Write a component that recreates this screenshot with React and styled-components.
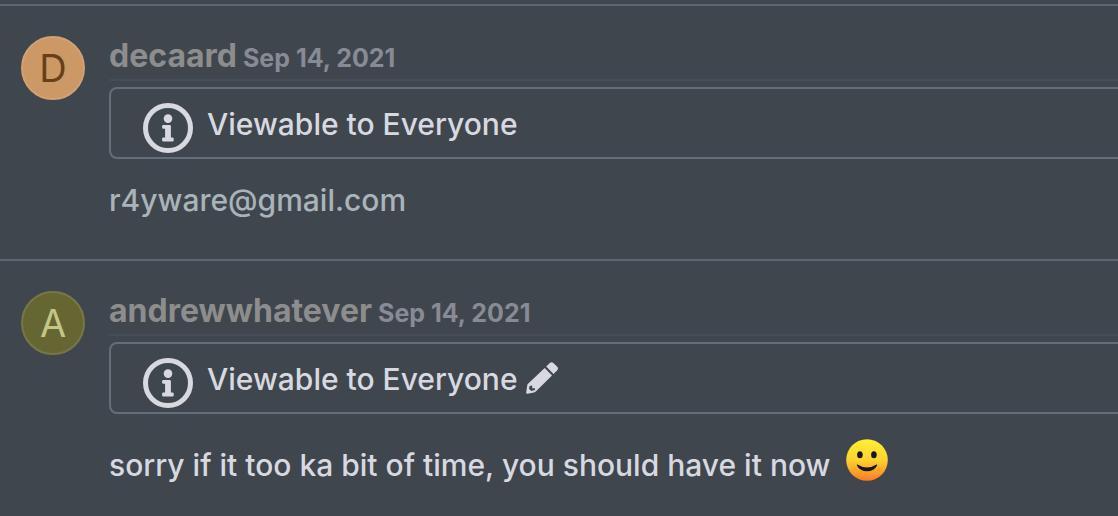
import styled, { createGlobalStyle } from 'styled-components';

const GlobalStyle = createGlobalStyle`
  body {
    margin: 0;
    background-color: #40464e;
    color: #d8d9e0;
    font-family: Inter, "Liberation Sans", sans-serif;
    font-size: 30px;
    font-weight: 500;
    line-height: 40px;
  }
`;

const Thread = styled.main`
  padding-top: 4px;
  overflow: hidden;
`;

// One comment, avatar on the left and content on the right
const Entry = styled.article`
  display: flex;
  gap: 24px;
  padding: 30px 0 39px 21px;
  border-top: 2px solid #5c6672;
`;

const Avatar = styled.div`
  display: flex;
  flex-shrink: 0;
  align-items: center;
  justify-content: center;
  box-sizing: border-box;
  width: 64px;
  height: 64px;
  border: 2px solid ${(props) => props.$ring};
  border-radius: 50%;
  background-color: ${(props) => props.$fill};
  color: ${(props) => props.$ink};
  font-size: 38px;
  font-weight: 400;
`;

const Content = styled.div`
  flex: 1;
  min-width: 0;
`;

const EntryHeader = styled.header`
  display: flex;
  align-items: baseline;
  gap: 6px;
  height: 43px;
  border-bottom: 2px solid #474d58;
`;

const Author = styled.a`
  color: #8d8d8d;
  font-size: 32px;
  font-weight: 700;
  text-decoration: none;
`;

const Posted = styled.time`
  color: #888b95;
  font-size: 25px;
  font-weight: 700;
`;

// Open on the right, it runs past the window edge
const Visibility = styled.div`
  display: flex;
  align-items: center;
  box-sizing: border-box;
  height: 72px;
  margin: 6px -8px 0 0;
  padding: 2px 0 0 32px;
  border: 2px solid #646d7a;
  border-radius: 8px;
`;

const InfoIcon = styled.svg`
  width: 50px;
  height: 50px;
  margin: 8px 14px 0 0;
`;

const EditButton = styled.button`
  display: flex;
  margin: 0 0 2px 8px;
  padding: 0;
  border: 0;
  background: none;
  color: inherit;
  cursor: pointer;
`;

const Message = styled.p`
  margin: 21px 0 0;
  color: ${(props) => (props.$muted ? '#a9b4ba' : 'inherit')};
`;

const Emoji = styled.svg`
  width: 42px;
  height: 42px;
  margin: 4px 0 5px 8px;
  vertical-align: -10px;
`;

function Info() {
  return (
    <InfoIcon viewBox="0 0 50 50" aria-hidden="true">
      <circle cx="25" cy="25" r="22.5" fill="none" stroke="currentColor" strokeWidth="5" />
      <circle cx="25" cy="15.6" r="4.3" fill="currentColor" />
      <path
        d="M20.3 22h6.4q1.2 0 1.2 1.2v11.4h1.6q1.2 0 1.2 1.2v1.4q0 1.2-1.2 1.2h-9.2q-1.2 0-1.2-1.2v-1.4q0-1.2 1.2-1.2h1.8v-8.8h-1.8q-1.2 0-1.2-1.2v-1.4q0-1.2 1.2-1.2z"
        fill="currentColor"
      />
    </InfoIcon>
  );
}

function Pencil() {
  return (
    <svg width="32" height="32" viewBox="0 0 32 32" fill="currentColor" aria-hidden="true">
      <path d="M20.2 4.6l3.4-3.4q2-2 4 0l3.4 3.4q2 2 0 4l-3.5 3.4z" />
      <path
        fillRule="evenodd"
        d="M18.7 6.1l7.3 7.3-16.2 16.2q-.7.7-1.8.9l-6.4 1.3q-1.6.2-1.4-1.4l1-7q.1-.9.8-1.6zM3.6 23.9l-.6 2.9 2.2 2.2 3.8-.9v-1.9h-2.8v-2.8z"
      />
    </svg>
  );
}

function Smile() {
  return (
    <Emoji viewBox="0 0 42 42" role="img" aria-label="Slightly smiling face">
      <defs>
        <linearGradient id="smile-face" x1="0" y1="0" x2="0" y2="1">
          <stop offset="0" stopColor="#fff033" />
          <stop offset="0.5" stopColor="#ffd22f" />
          <stop offset="1" stopColor="#fb7a23" />
        </linearGradient>
      </defs>
      <circle cx="21" cy="21" r="20.8" fill="url(#smile-face)" />
      <ellipse cx="13.9" cy="15.8" rx="2.8" ry="3.5" fill="#17172a" />
      <ellipse cx="27.9" cy="15.8" rx="2.8" ry="3.5" fill="#17172a" />
      <path
        d="M11.4 25.6q9.6 6 19.2 0 .9-.1.5.9-3 5.8-10.1 5.8t-10.1-5.8q-.4-1 .5-.9z"
        fill="#17172a"
      />
    </Emoji>
  );
}

const comments = [
  {
    author: 'decaard',
    colors: { $fill: '#cc9966', $ring: '#d1a173', $ink: '#664019' },
    text: 'r4yware@gmail.com',
    muted: true,
  },
  {
    author: 'andrewwhatever',
    colors: { $fill: '#666633', $ring: '#777747', $ink: '#c5c587' },
    text: 'sorry if it too ka bit of time, you should have it now',
    editable: true,
    smile: true,
  },
];

export default function App() {
  return (
    <>
      <GlobalStyle />
      <Thread>
        {comments.map((comment) => (
          <Entry key={comment.author}>
            <Avatar {...comment.colors}>{comment.author[0].toUpperCase()}</Avatar>
            <Content>
              <EntryHeader>
                <Author href={`#${comment.author}`}>{comment.author}</Author>
                <Posted dateTime="2021-09-14">Sep 14, 2021</Posted>
              </EntryHeader>
              <Visibility>
                <Info />
                <span>Viewable to Everyone</span>
                {comment.editable && (
                  <EditButton type="button" aria-label="Edit visibility">
                    <Pencil />
                  </EditButton>
                )}
              </Visibility>
              <Message $muted={comment.muted}>
                {comment.text}
                {comment.smile && <> <Smile /></>}
              </Message>
            </Content>
          </Entry>
        ))}
      </Thread>
    </>
  );
}
